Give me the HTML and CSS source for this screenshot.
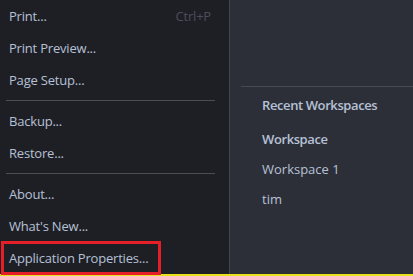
FILE: index.html
```html
<!DOCTYPE html>
<html lang="en">
<head>
  <meta charset="UTF-8" />
  <title>File menu</title>
  <link rel="stylesheet" href="styles.css">
</head>
<body>
  <div class="screen">
    <nav class="menu">
      <div class="menu-item"><span>Print...</span><span class="shortcut">Ctrl+P</span></div>
      <div class="menu-item"><span>Print Preview...</span></div>
      <div class="menu-item"><span>Page Setup...</span></div>
      <div class="separator"></div>
      <div class="menu-item"><span>Backup...</span></div>
      <div class="menu-item"><span>Restore...</span></div>
      <div class="separator"></div>
      <div class="menu-item"><span>About...</span></div>
      <div class="menu-item"><span>What's New...</span></div>
      <div class="menu-item marked"><span>Application Properties...</span></div>
    </nav>
    <section class="recent">
      <div class="recent-top"></div>
      <div class="recent-list">
        <div class="recent-title">Recent Workspaces</div>
        <div class="recent-item bold">Workspace</div>
        <div class="recent-item">Workspace 1</div>
        <div class="recent-item">tim</div>
      </div>
    </section>
  </div>
</body>
</html>
```

FILE: styles.css
```css
html, body {
  margin: 0;
  height: 100%;
}
body {
  background: #1e1f25;
  font-family: 'Open Sans', 'Noto Sans', sans-serif;
  font-size: 13px;
  color: #b6c1d6;
}
.screen {
  display: flex;
  height: 274px;
  border-bottom: 2px solid #e8e01c;
}
.menu {
  width: 229px;
  background: #1e1f25;
  border-right: 1px solid #44464f;
  flex-shrink: 0;
}
.menu-item {
  height: 32px;
  display: flex;
  align-items: center;
  justify-content: space-between;
  padding: 0 18px 0 9px;
  letter-spacing: -0.2px;
}
.shortcut {
  color: #4b4e5a;
}
.separator {
  height: 1px;
  background: #4a4c56;
  margin: 4px 14px 4px 6px;
}
.menu-item.marked {
  width: 151px;
  margin-left: 2px;
  padding-left: 7px;
  padding-right: 0;
  outline: 3px solid #e61e27;
  outline-offset: -2px;
}
.recent {
  flex: 1;
  background: #2d2f38;
}
.recent-top {
  height: 86px;
  margin-left: 11px;
  border-bottom: 1px solid #464955;
}
.recent-list {
  padding: 3px 0 0 32px;
}
.recent-title,
.recent-item {
  height: 30px;
  display: flex;
  align-items: center;
}
.recent-title + .recent-item {
  margin-top: 4px;
}
.recent-title,
.bold {
  font-weight: 600;
  letter-spacing: -0.4px;
}
```
